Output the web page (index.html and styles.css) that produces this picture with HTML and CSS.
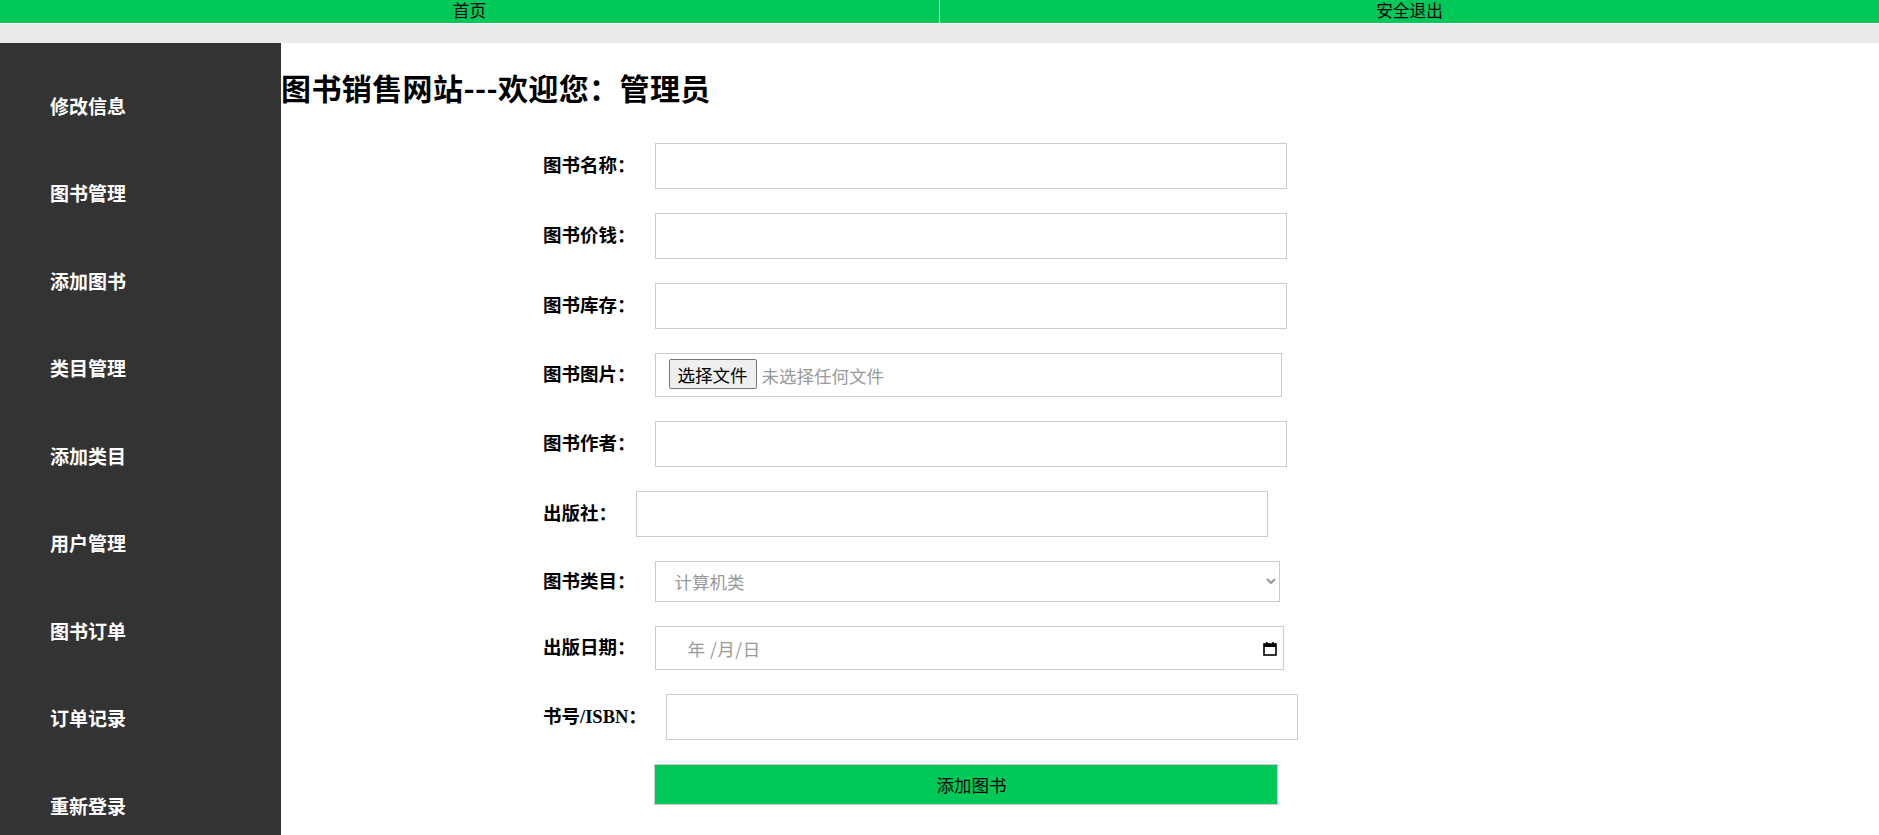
FILE: index.html
```html
<!DOCTYPE html>
<html lang="zh-CN">
<head>
    <meta charset="UTF-8">
    <meta name="viewport" content="width=device-width, initial-scale=1.0">
    <title>图书销售网站 - 添加图书</title>
    <link rel="stylesheet" href="styles.css">
</head>
<body>
    <div class="topbar">
        <a href="#">首页</a>
        <a href="#">安全退出</a>
    </div>
    <div class="band"></div>
    <div class="layout">
        <ul class="sidebar">
            <li><a href="#">修改信息</a></li>
            <li><a href="#">图书管理</a></li>
            <li><a href="#">添加图书</a></li>
            <li><a href="#">类目管理</a></li>
            <li><a href="#">添加类目</a></li>
            <li><a href="#">用户管理</a></li>
            <li><a href="#">图书订单</a></li>
            <li><a href="#">订单记录</a></li>
            <li><a href="#">重新登录</a></li>
        </ul>
        <div class="main">
            <h2>图书销售网站---欢迎您：管理员</h2>
            <form class="book-form">
                <div class="row">
                    <label>图书名称：</label>
                    <input class="field" type="text" name="name">
                </div>
                <div class="row">
                    <label>图书价钱：</label>
                    <input class="field" type="text" name="price">
                </div>
                <div class="row">
                    <label>图书库存：</label>
                    <input class="field" type="text" name="stock">
                </div>
                <div class="row">
                    <label>图书图片：</label>
                    <div class="file-box">
                        <button type="button" class="file-btn">选择文件</button>
                        <span class="file-name">未选择任何文件</span>
                    </div>
                </div>
                <div class="row">
                    <label>图书作者：</label>
                    <input class="field" type="text" name="author">
                </div>
                <div class="row">
                    <label>出版社：</label>
                    <input class="field" type="text" name="press">
                </div>
                <div class="row">
                    <label>图书类目：</label>
                    <select class="category" name="category">
                        <option>计算机类</option>
                        <option>文学类</option>
                        <option>历史类</option>
                    </select>
                </div>
                <div class="row">
                    <label>出版日期：</label>
                    <div class="date-box">
                        <span class="date-text">年 /月/日</span>
                        <svg class="date-icon" width="14" height="15" viewBox="0 0 14 15">
                            <rect x="1" y="3" width="12" height="11" fill="none" stroke="#000" stroke-width="1.6"/>
                            <rect x="1" y="3" width="12" height="3" fill="#000"/>
                            <rect x="3" y="1" width="1.6" height="3" fill="#000"/>
                            <rect x="9.4" y="1" width="1.6" height="3" fill="#000"/>
                        </svg>
                    </div>
                </div>
                <div class="row">
                    <label>书号/ISBN：</label>
                    <input class="field" type="text" name="isbn">
                </div>
                <div class="row actions">
                    <button type="submit" class="submit">添加图书</button>
                </div>
            </form>
        </div>
    </div>
</body>
</html>
```

FILE: styles.css
```css
body {
    margin: 0;
    font-family: "Liberation Serif", "Noto Sans CJK SC", serif;
    color: #000;
}
.topbar {
    display: flex;
    gap: 1px;
    background-color: #fff;
    border-bottom: 1px solid #fff;
}
.topbar a {
    flex: 1;
    height: 23px;
    line-height: 23px;
    background-color: #00c95a;
    color: #000;
    text-align: center;
    text-decoration: none;
    font-size: 16.67px;
}
.band {
    height: 19px;
    background-color: #ebebeb;
}
.layout {
    display: flex;
    min-height: 792px;
}
.sidebar {
    width: 281px;
    flex-shrink: 0;
    box-sizing: border-box;
    margin: 0;
    padding: 20.75px 0 0 50px;
    list-style: none;
    background-color: #333;
}
.sidebar li {
    height: 87.5px;
    line-height: 87.5px;
}
.sidebar a {
    color: #fff;
    font-size: 19px;
    font-weight: bold;
    text-decoration: none;
}
.main {
    flex: 1;
}
.main h2 {
    margin: 22px 0 0;
    font-family: "Noto Sans CJK SC", sans-serif;
    font-size: 30px;
    line-height: 44px;
    font-weight: bold;
    letter-spacing: 0.4px;
}
.book-form {
    margin: 34px 0 0 262px;
}
.row {
    display: flex;
    align-items: center;
    margin-bottom: 24px;
}
.row label {
    margin: 0 19px 4px 0;
    font-size: 18.5px;
    font-weight: bold;
}
.field {
    box-sizing: border-box;
    width: 632px;
    height: 46px;
    padding: 0 10px;
    border: 1px solid #ccc;
    font-size: 17.5px;
    outline: none;
}
.file-box {
    box-sizing: border-box;
    display: flex;
    align-items: center;
    width: 627px;
    height: 44px;
    padding-left: 13px;
    border: 1px solid #ccc;
    font-family: "Noto Sans CJK SC", sans-serif;
    font-size: 17.5px;
}
.file-btn {
    height: 30px;
    margin-bottom: 2px;
    padding: 0 8px;
    background-color: #efefef;
    border: 1px solid #767676;
    border-radius: 2px;
    font-family: "Noto Sans CJK SC", sans-serif;
    font-size: 17.5px;
    color: #000;
}
.file-name {
    margin-left: 5px;
    color: #999;
}
.category {
    box-sizing: border-box;
    width: 625px;
    height: 41px;
    padding: 0 10px 0 15px;
    border: 1px solid #ccc;
    border-radius: 0;
    background-color: #fff;
    color: #999;
    font-family: "Noto Sans CJK SC", sans-serif;
    font-size: 17.5px;
    outline: none;
}
.date-box {
    box-sizing: border-box;
    display: flex;
    align-items: center;
    justify-content: space-between;
    width: 629px;
    height: 44px;
    padding: 0 6px 0 32px;
    border: 1px solid #ccc;
}
.date-text {
    color: #999;
    font-family: "Noto Sans CJK SC", sans-serif;
    font-size: 17.5px;
    letter-spacing: 0.5px;
}
.row.actions {
    margin-bottom: 0;
}
.submit {
    width: 624px;
    height: 41px;
    margin-left: 111px;
    padding: 0 0 0 11px;
    background-color: #00c95a;
    border: 1px solid #ccc;
    color: #000;
    font-family: "Noto Sans CJK SC", sans-serif;
    font-size: 17.5px;
}
```
